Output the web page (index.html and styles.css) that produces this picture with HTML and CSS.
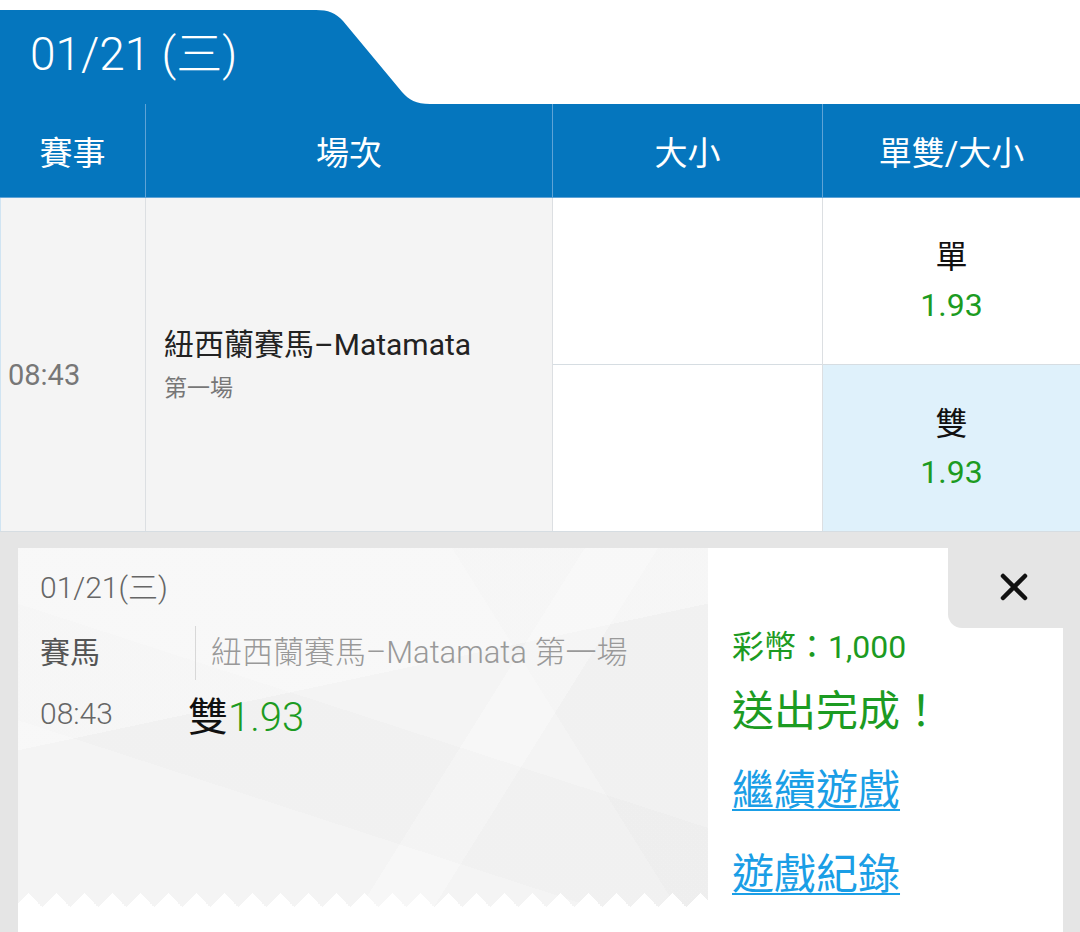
FILE: index.html
```html
<!DOCTYPE html>
<html lang="zh-Hant">
<head>
<meta charset="utf-8">
<title>賽馬</title>
<link rel="stylesheet" href="styles.css">
</head>
<body>
<div class="page">
  <div class="tab-row">
    <div class="tab">
      <svg class="tab-shape" width="440" height="94" viewBox="0 0 440 94" aria-hidden="true">
        <path d="M0 0 H316 C328 0 336 3 343 11 L402 82 C409 90 416 94 430 94 H0 Z" fill="#0576be"/>
      </svg>
      <span class="tab-text">01/21 (三)</span>
    </div>
  </div>

  <div class="table">
    <div class="th">賽事</div>
    <div class="th">場次</div>
    <div class="th">大小</div>
    <div class="th last">單雙/大小</div>

    <div class="td race-time">08:43</div>
    <div class="td event">
      <div class="event-name">紐西蘭賽馬–Matamata</div>
      <div class="event-sub">第一場</div>
    </div>
    <div class="td stack">
      <div class="cell empty"></div>
      <div class="cell empty"></div>
    </div>
    <div class="td stack last">
      <div class="cell odd"><span class="pick">單</span><span class="rate">1.93</span></div>
      <div class="cell odd selected"><span class="pick">雙</span><span class="rate">1.93</span></div>
    </div>
  </div>

  <div class="tray">
    <div class="ticket">
      <div class="slip">
        <div class="slip-date">01/21(三)</div>
        <div class="slip-row">
          <span class="slip-label">賽馬</span>
          <span class="slip-event">紐西蘭賽馬–Matamata 第一場</span>
        </div>
        <div class="slip-row bet">
          <span class="slip-time">08:43</span>
          <span class="slip-pick">雙<span class="rate">1.93</span></span>
        </div>
      </div>
      <div class="result">
        <div class="coins">彩幣：1,000</div>
        <div class="done">送出完成！</div>
        <a class="link" href="#">繼續遊戲</a>
        <a class="link" href="#">遊戲紀錄</a>
      </div>
      <div class="close">
        <svg width="28" height="28" viewBox="0 0 28 28" aria-hidden="true">
          <path d="M3 3 L25 25 M25 3 L3 25" stroke="#111" stroke-width="4.5" stroke-linecap="round"/>
        </svg>
      </div>
    </div>
  </div>
</div>
</body>
</html>
```

FILE: styles.css
```css
* { box-sizing: border-box; }

html, body {
  margin: 0;
  padding: 0;
  background: #ffffff;
  font-family: "Roboto", "Noto Sans CJK TC", sans-serif;
}

.page {
  width: 1080px;
  height: 932px;
  display: flex;
  flex-direction: column;
  overflow: hidden;
}

.tab-row {
  height: 104px;
  padding-top: 10px;
  display: flex;
}

.tab {
  position: relative;
  width: 440px;
  height: 94px;
  display: flex;
  align-items: center;
  padding-left: 30px;
}

.tab-shape {
  position: absolute;
  left: 0;
  top: 0;
}

.tab-text {
  position: relative;
  color: #ffffff;
  font-size: 46px;
  font-weight: 300;
  margin-top: -14px;
}

.table {
  display: grid;
  grid-template-columns: 146px 407px 270px 257px;
  grid-template-rows: 94px 333px;
  border-bottom: 1px solid #d6dde2;
}

.th {
  background: #0576be;
  color: #ffffff;
  font-size: 33px;
  display: flex;
  align-items: center;
  justify-content: center;
  border-right: 1px solid #5fa3d6;
  border-bottom: 1px solid #5fa3d6;
}

.th.last { border-right: none; }

.td {
  border-right: 1px solid #dcdfe2;
}

.td.last { border-right: none; }

.race-time {
  background: #f4f4f4;
  border-left: 1px solid #d0e4f2;
  color: #777777;
  font-size: 29px;
  display: flex;
  align-items: center;
  padding-left: 7px;
  padding-top: 20px;
}

.event {
  background: #f4f4f4;
  display: flex;
  flex-direction: column;
  justify-content: center;
  padding-left: 18px;
}

.event-name {
  color: #222222;
  font-size: 30px;
  line-height: 40px;
}

.event-sub {
  color: #777777;
  font-size: 23px;
  line-height: 30px;
  margin-top: 9px;
}

.stack {
  display: grid;
  grid-template-rows: 1fr 1fr;
  background: #ffffff;
}

.cell {
  display: flex;
  flex-direction: column;
  align-items: center;
  justify-content: center;
}

.cell:first-child {
  border-bottom: 1px solid #d6dde2;
}

.odd .pick {
  color: #111111;
  font-size: 32px;
  line-height: 44px;
}

.rate {
  color: #1c9b22;
}

.odd .rate {
  font-size: 32px;
  line-height: 44px;
  margin-top: 4px;
}

.selected {
  background: #dff1fb;
}

.tray {
  flex: 1;
  background: #e5e5e5;
  padding: 16px 17px 0 18px;
  display: flex;
}

.ticket {
  position: relative;
  flex: 1;
  background: #ffffff;
  display: flex;
  align-items: flex-start;
}

.slip {
  position: relative;
  width: 690px;
  height: 359px;
  padding: 20px 0 0 22px;
  background-color: #f4f4f4;
  background-image:
    linear-gradient(168deg, rgba(255,255,255,0.35) 0 40%, transparent 40%),
    linear-gradient(18deg, transparent 0 32%, rgba(0,0,0,0.012) 32% 52%, transparent 52%),
    linear-gradient(122deg, transparent 0 62%, rgba(255,255,255,0.3) 62% 70%, transparent 70%),
    linear-gradient(58deg, transparent 0 72%, rgba(0,0,0,0.012) 72%);
}

.slip::after {
  content: "";
  position: absolute;
  left: 0;
  right: 0;
  bottom: 0;
  height: 14px;
  background: conic-gradient(from 135deg at 50% 0, #ffffff 90deg, transparent 0) -4px 0 / 28px 14px repeat-x;
}

.slip-date {
  color: #666666;
  font-size: 30px;
  line-height: 40px;
  font-weight: 300;
}

.slip-row {
  display: flex;
  align-items: center;
  margin-top: 18px;
}

.slip-label {
  width: 155px;
  color: #555555;
  font-size: 30px;
  line-height: 40px;
}

.slip-time {
  width: 148px;
  color: #666666;
  font-size: 30px;
  line-height: 40px;
  font-weight: 300;
}

.slip-event {
  color: #999999;
  font-size: 31px;
  line-height: 54px;
  border-left: 1px solid #d8d8d8;
  padding-left: 15px;
  font-weight: 300;
}

.slip-row.bet {
  margin-top: 5px;
}

.slip-pick {
  color: #111111;
  font-size: 40px;
  line-height: 50px;
  margin-top: 8px;
}

.slip-pick .rate {
  font-weight: 300;
}

.result {
  flex: 1;
  display: flex;
  flex-direction: column;
  align-items: flex-start;
  padding: 77px 0 0 24px;
}

.coins {
  color: #1c9b22;
  font-size: 32px;
  line-height: 44px;
}

.done {
  color: #1c9b22;
  font-size: 42px;
  line-height: 56px;
  margin-top: 15px;
}

.link {
  color: #1a9ee6;
  font-size: 42px;
  line-height: 56px;
  text-decoration: underline;
  text-decoration-thickness: 2px;
  text-underline-offset: 4px;
}

.done + .link { margin-top: 23px; }
.link + .link { margin-top: 28px; }

.close {
  position: absolute;
  top: 0;
  right: 0;
  width: 115px;
  height: 80px;
  background: #e5e5e5;
  border-bottom-left-radius: 14px;
  display: flex;
  align-items: center;
  justify-content: center;
  padding-left: 16px;
  padding-bottom: 2px;
}
```
